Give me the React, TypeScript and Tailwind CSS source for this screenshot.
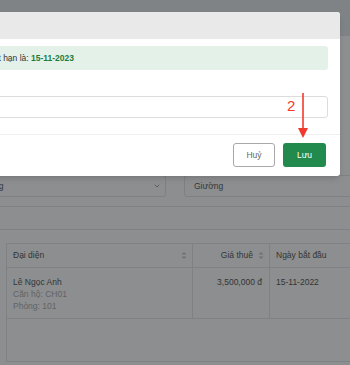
import { ChevronDown } from 'lucide-react';

function SortIcon() {
  return (
    <svg width="6" height="9" viewBox="0 0 6 9" className="shrink-0">
      <path d="M3 1 L5.5 3.6 H0.5 Z" fill="#c8c8c8" />
      <path d="M3 8 L5.5 5.4 H0.5 Z" fill="#c8c8c8" />
    </svg>
  );
}

function Background() {
  return (
    <div className="bg-white text-[8.5px] text-[#595959]">
      <div className="h-[36px] bg-[#e7ebed]" />
      <div className="h-[139px]" />
      {/* filters */}
      <div className="flex gap-[18px] h-[22px]">
        <div className="w-[244px] shrink-0 border border-[#e3e6e9] rounded-[3px] flex items-center justify-between pl-[9px] pr-[4px] -ml-[78px]">
          <span className="text-[#5c5c5c]">Trạng thái sử dụng</span>
          <ChevronDown className="w-[8px] h-[8px] text-[#777]" strokeWidth={2} />
        </div>
        <div className="flex-1 border border-[#e3e6e9] rounded-[3px] flex items-center pl-[9px] -mr-[10px]">
          <span className="text-[#5c5c5c]">Giường</span>
        </div>
      </div>
      <div className="mt-[9px] border-t border-b border-[#e6e9ec] h-[24px]" />
      <div className="h-[13px]" />
      {/* table */}
      <div className="ml-[6px] border-l border-[#e6e9ec]">
        <div className="flex h-[25px] border-t border-b border-[#e6e9ec] items-center">
          <div className="w-[186px] shrink-0 flex items-center justify-between pl-[6px] pr-[5px] h-full border-r border-[#e6e9ec]">
            <span>Đại diện</span>
            <SortIcon />
          </div>
          <div className="w-[77px] shrink-0 flex items-center justify-end gap-[5px] pr-[5px] h-full border-r border-[#e6e9ec]">
            <span>Giá thuê</span>
            <SortIcon />
          </div>
          <div className="flex-1 pl-[6px] whitespace-nowrap">Ngày bắt đầu</div>
        </div>
        <div className="flex h-[51px] border-b border-[#e6e9ec]">
          <div className="w-[186px] shrink-0 pl-[6px] pt-[8px] border-r border-[#e6e9ec] leading-[12px]">
            <div>Lê Ngọc Anh</div>
            <div className="text-[#b0b0b0]">Căn hộ: CH01</div>
            <div className="text-[#b0b0b0]">Phòng: 101</div>
          </div>
          <div className="w-[77px] shrink-0 pr-[7px] pt-[8px] text-right leading-[12px] border-r border-[#e6e9ec]">
            3,500,000 đ
          </div>
          <div className="flex-1 pl-[6px] pt-[8px] leading-[12px]">15-11-2022</div>
        </div>
        <div className="h-[43px] border-b border-[#e6e9ec]" />
      </div>
    </div>
  );
}

function Modal() {
  return (
    <div className="absolute top-[12px] left-[-142px] w-[482px] h-[164px] bg-white rounded-[3px] shadow-md overflow-hidden text-[8.5px]">
      <div className="h-[27px] bg-[#e9e9e9]" />
      <div className="px-[12px] pb-[16px]">
        <div className="mt-[7px] h-[24px] bg-[#e4f1e8] rounded-[3px] flex items-center pl-[8px] whitespace-nowrap text-[#333]">
          <span>Hợp đồng sau khi gia hạn sẽ hết hạn là:&nbsp;</span>
          <span className="font-bold text-[#1e7b3c]">15-11-2023</span>
        </div>
        <div className="mt-[26px] h-[22px] border border-[#dcdcdc] rounded-[3px]" />
      </div>
      <div className="border-t border-[#efefef] flex justify-end gap-[8px] px-[14px] pt-[8px]">
        <button className="w-[42px] h-[24px] rounded-[3px] border border-[#a8a8a8] bg-white text-[#666] text-[8.5px]">
          Huỷ
        </button>
        <button className="w-[43px] h-[24px] rounded-[3px] bg-[#218a4c] text-white text-[8.5px]">
          Lưu
        </button>
      </div>
    </div>
  );
}

export default function App() {
  return (
    <div className="relative w-[350px] h-[365px] overflow-hidden font-['Liberation_Sans',Arial,sans-serif]">
      <Background />
      <div className="absolute inset-0 bg-[rgba(10,14,18,0.47)]" />
      <Modal />
      {/* annotation */}
      <span className="absolute left-[287px] top-[96px] text-[15px] leading-[20px] text-[#f03a2e]">2</span>
      <svg className="absolute left-[296px] top-[92px]" width="14" height="48" viewBox="0 0 14 48">
        <line x1="7" y1="1" x2="7" y2="38" stroke="#f03a2e" strokeWidth="1.6" />
        <path d="M2 36 L12 36 L7 46 Z" fill="#f03a2e" />
      </svg>
    </div>
  );
}
